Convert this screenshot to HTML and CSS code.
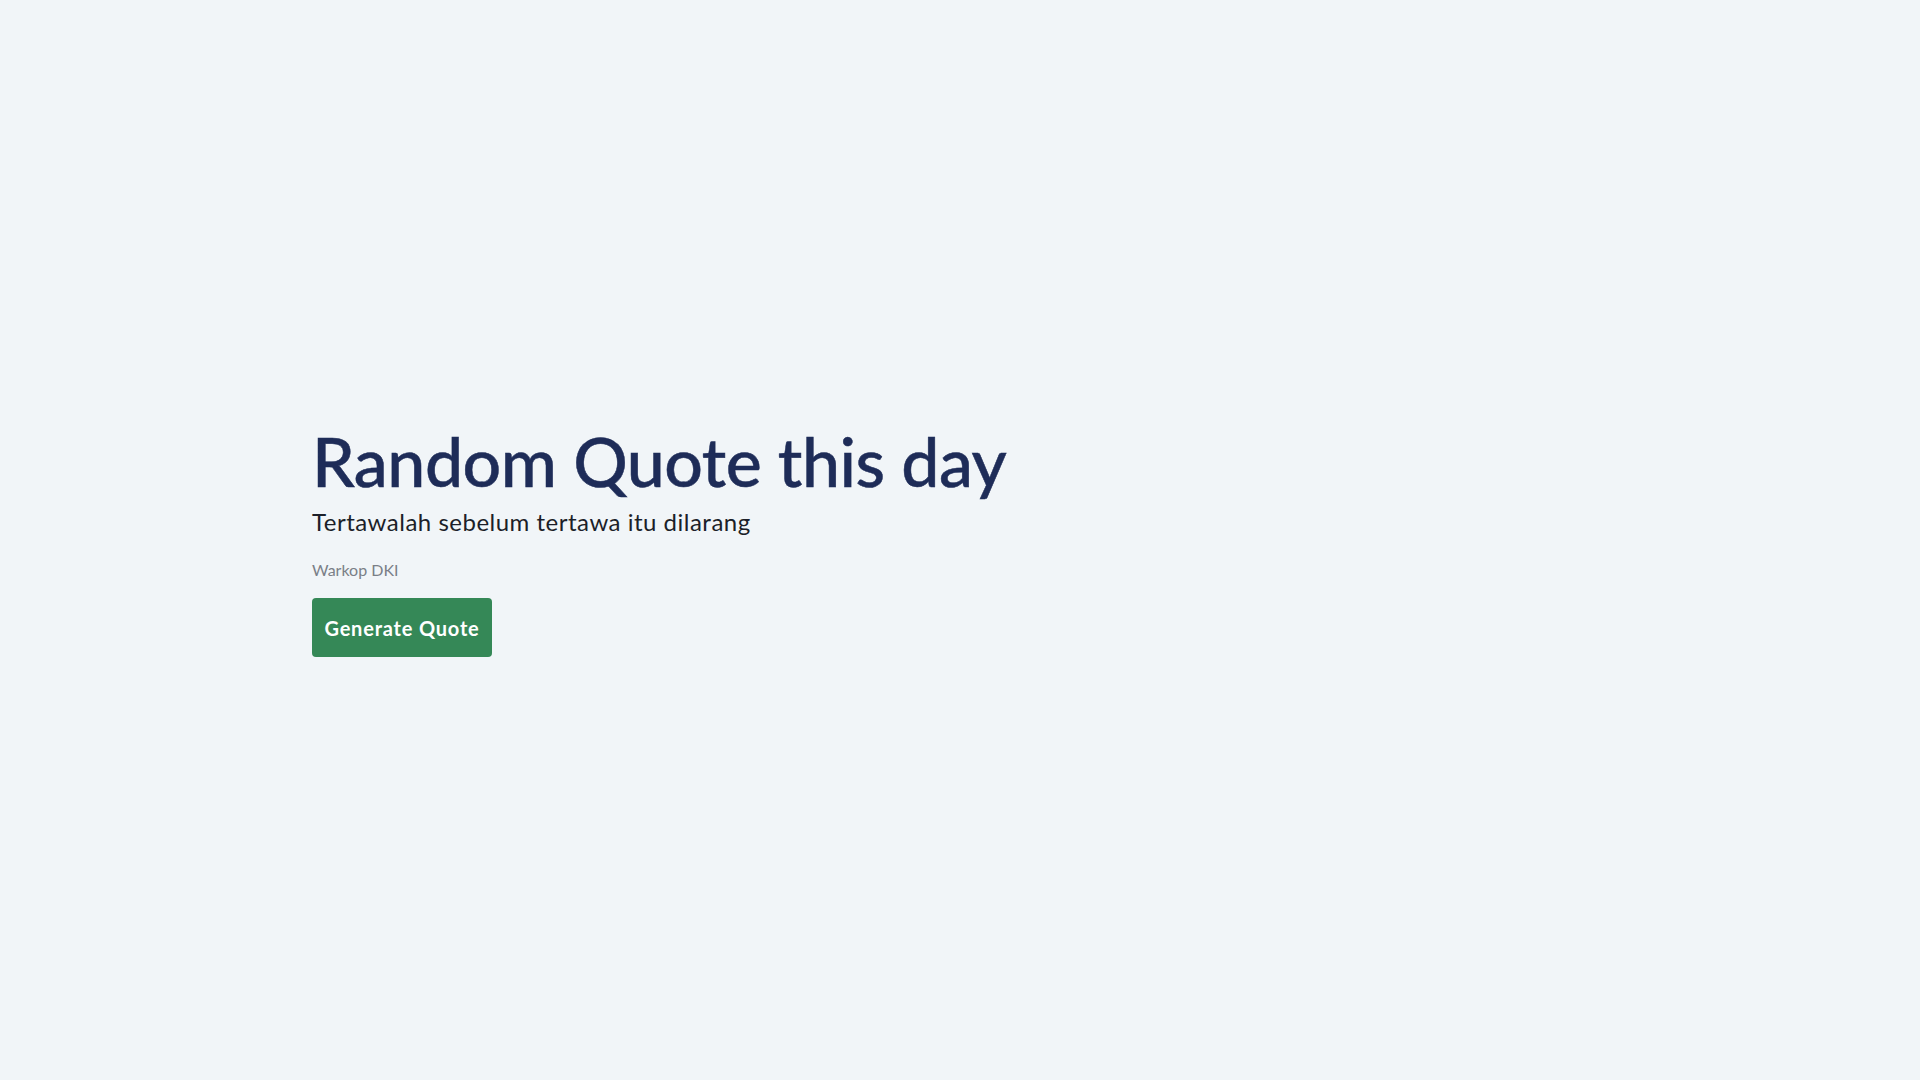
FILE: index.html
```html
<!DOCTYPE html>
<html lang="id">
<head>
<meta charset="utf-8">
<title>Random Quote</title>
<link rel="stylesheet" href="styles.css">
</head>
<body>
<main class="page">
  <section class="container">
    <h1 class="title">Random Quote this day</h1>
    <p class="quote">Tertawalah sebelum tertawa itu dilarang</p>
    <p class="author">Warkop DKI</p>
    <button class="btn" type="button">Generate Quote</button>
  </section>
</main>
</body>
</html>
```
FILE: styles.css
```css
* { box-sizing: border-box; }
html, body { margin: 0; padding: 0; }
body {
  background: #f1f5f8;
  font-family: "Lato", "Open Sans", sans-serif;
  color: #1a202c;
}
.page {
  min-height: 100vh;
  padding-top: 2px;
  display: flex;
  align-items: center;
}
.container {
  width: 100%;
  max-width: 1296px;
  margin: 0 auto;
}
.title {
  margin: 0;
  font-size: 68px;
  line-height: 72px;
  font-weight: 500;
  letter-spacing: -0.5px;
  color: #1e2c58;
  -webkit-text-stroke: 0.5px #1e2c58;
}
.quote {
  margin: 9px 0 0;
  font-size: 24px;
  line-height: 32px;
  letter-spacing: 0.5px;
  color: #1c1f29;
}
.author {
  margin: 20px 0 0;
  font-size: 16px;
  line-height: 24px;
  color: #7a7f87;
}
.btn {
  margin-top: 16px;
  display: block;
  width: 180px;
  height: 59px;
  padding: 0 12px;
  border: 0;
  border-radius: 4px;
  background: #358857;
  color: #ffffff;
  font-family: "Lato", "Open Sans", sans-serif;
  font-size: 20px;
  font-weight: 700;
  letter-spacing: 0.8px;
}
```
